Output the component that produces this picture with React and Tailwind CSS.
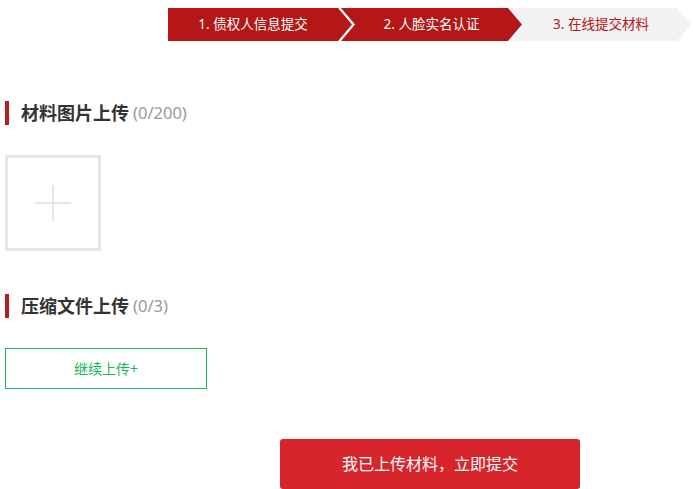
import React from 'react';

const steps = [
    { label: '1. 债权人信息提交', active: true, first: true, w: 'w-[184px]' },
    { label: '2. 人脸实名认证', active: true, w: 'w-[181px]' },
    { label: '3. 在线提交材料', active: false, w: 'w-[180px]' },
];

const SectionTitle = ({ title, count }) => (
    <div className="flex items-center h-[24px]">
        <div className="w-[4px] h-[24px] bg-[#b81c1c]" />
        <h3 className="ml-[12px] text-[18px] font-bold text-[#333]">{title}</h3>
        <span className="ml-[4px] text-[16.5px] text-[#999]">{count}</span>
    </div>
);

const App = () => {
    return (
        <div className="w-[693px] h-[489px] bg-white overflow-hidden font-['Noto_Sans','Noto_Sans_CJK_SC',sans-serif]">
            {/* Steps */}
            <div className="flex pt-[8px] pl-[168px]">
                {steps.map((s, i) => (
                    <div
                        key={i}
                        className={`${s.w} h-[33px] flex items-center justify-center text-[13.5px] ${i > 0 ? '-ml-[11px] pl-[14px]' : ''} pr-[14px]
                            ${s.active ? 'bg-[#b51616] text-white' : 'bg-[#f2f2f2] text-[#b51616]'}
                            ${s.first
                                ? '[clip-path:polygon(0_0,calc(100%-14px)_0,100%_50%,calc(100%-14px)_100%,0_100%)]'
                                : '[clip-path:polygon(0_0,calc(100%-14px)_0,100%_50%,calc(100%-14px)_100%,0_100%,14px_50%)]'}`}
                    >
                        {s.label}
                    </div>
                ))}
            </div>

            {/* Image upload */}
            <div className="pl-[5px] mt-[60px]">
                <SectionTitle title="材料图片上传" count="(0/200)" />
                <div className="mt-[30px] w-[96px] h-[96px] border-[3px] border-[#e6e6e6] flex items-center justify-center">
                    <div className="relative w-[36px] h-[36px]">
                        <div className="absolute left-0 right-0 top-[17px] h-[2px] bg-[#e6e6e6]" />
                        <div className="absolute top-0 bottom-0 left-[17px] w-[2px] bg-[#e6e6e6]" />
                    </div>
                </div>
            </div>

            {/* Zip upload */}
            <div className="pl-[5px] mt-[43px]">
                <SectionTitle title="压缩文件上传" count="(0/3)" />
                <button className="mt-[30px] w-[202px] h-[41px] border border-[#1bb55c] text-[#1bb55c] text-[14px] flex items-center justify-center">
                    继续上传+
                </button>
            </div>

            {/* Submit */}
            <div className="pl-[280px] mt-[50px]">
                <button className="w-[300px] h-[50px] rounded-[3px] bg-[#d7262b] text-white text-[16px]">
                    我已上传材料，立即提交
                </button>
            </div>
        </div>
    );
};

export default App;
